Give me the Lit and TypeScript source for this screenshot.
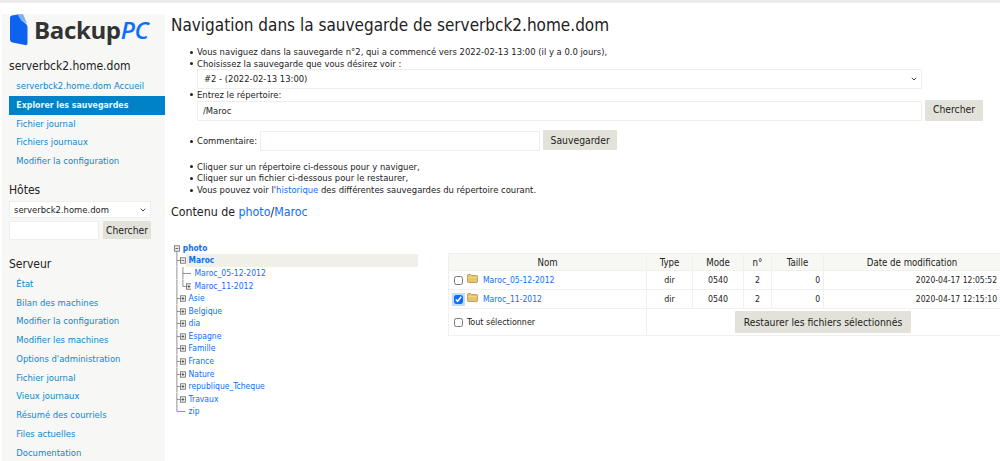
import { LitElement, html, css, svg } from "lit";
import { customElement } from "lit/decorators.js";

type Cell = "I" | "L" | "T" | "TM" | "TP" | "LP" | "M" | "E";
interface Row { cells: Cell[]; label: string; bold?: boolean; active?: boolean }

const treeRows: Row[] = [
  { cells: ["M"], label: "photo", bold: true },
  { cells: ["T", "TM"], label: "Maroc", bold: true, active: true },
  { cells: ["I", "T", "E"], label: "Maroc_05-12-2012" },
  { cells: ["I", "L", "LP"], label: "Maroc_11-2012" },
  ...["Asie", "Belgique", "dia", "Espagne", "Famille", "France", "Nature", "republique_Tcheque", "Travaux"].map(
    (label) => ({ cells: ["T", "TP"] as Cell[], label })
  ),
  { cells: ["L", "E"], label: "zip" },
];

const LINE = "#777";
const renderCell = (c: Cell) => {
  const inner =
    c === "M"
      ? svg`<rect x=".4" y="3.8" width="5" height="5.4" fill="#eee" stroke="#666" stroke-width=".8"/><path d="M1.5 6.5h2.8" stroke="#444" stroke-width=".8"/><path d="M2.9 9.200v3.400" stroke="${LINE}" stroke-width=".8"/>`
      : c === "TM"
      ? svg`<path d="M0 6.500h1" stroke="${LINE}" stroke-width=".8"/><rect x=".4" y="3.800" width="5" height="5.400" fill="#f2f2f0" stroke="#666" stroke-width=".8"/><path d="M1.500 6.500h2.800" stroke="#444" stroke-width=".8"/>`
      : c === "TP" || c === "LP"
      ? svg`<path d="M0 6.500h1" stroke="${LINE}" stroke-width=".8"/><rect x=".4" y="3.800" width="5" height="5.400" fill="#f2f2f0" stroke="#666" stroke-width=".8"/><path d="M1.500 6.500h2.800M2.900 5.100v2.800" stroke="#444" stroke-width=".8"/>`
      : c === "E"
      ? svg`<path d="M0 6.500h5.400" stroke="${LINE}" stroke-width=".8"/>`
      : c === "I"
      ? svg`<path d="M2.900 0v12.600" stroke="${LINE}" stroke-width=".8"/>`
      : c === "L"
      ? svg`<path d="M2.900 0v6.500h3" stroke="${LINE}" stroke-width=".8" fill="none"/>`
      : svg`<path d="M2.900 0v12.600M2.900 6.500h3" stroke="${LINE}" stroke-width=".8"/>`;
  return html`<svg class="cell" viewBox="0 0 5.800 12.600">${inner}</svg>`;
};

const folder = html`<svg class="folder" viewBox="0 0 11 9"><path d="M.5 2V1.200C.5.800.8.500 1.200.500h2.600l1 1.100h5c.4 0 .7.300.7.700V7.800c0 .4-.3.700-.7.700H1.200C.8 8.500.5 8.200.5 7.800Z" fill="#e9c46a" stroke="#a98a3c" stroke-width=".7"/><path d="M1 3h9v.6H1Z" fill="#f6e3a4"/></svg>`;

@customElement("app-root")
export class AppRoot extends LitElement {
  static styles = css`
    :host { display: block; height: 461px; overflow: hidden; background: #fff; color: #222; font-family: "DejaVu Sans Condensed", "DejaVu Sans", Verdana, sans-serif; font-stretch: condensed; font-size: 9.4px; }
    * { box-sizing: border-box; }
    a { color: #0d6efd; text-decoration: none; }
    .topline { height: 2.5px; background: #ececec; }
    .page { display: flex; align-items: flex-start; padding-left: 2px; padding-top: 11.5px; }

    .side { width: 163px; flex: none; height: 460px; background: #f7f7f5; }
    .logo { display: flex; align-items: center; gap: 6px; height: 32px; margin: 0 0 0 7px; }
    .logo svg { width: 19px; height: 32px; flex: none; }
    .logo-text { font-family: "Open Sans", sans-serif; font-stretch: normal; font-size: 24px; font-weight: 700; letter-spacing: -.35px; color: #333; line-height: 32px; }
    .logo-text i { color: #0d6efd; font-weight: 600; }
    .side h2 { margin: 13px 0 0; font-weight: 400; color: #222; font-size: 12px; padding-left: 7px; line-height: 14px; }
    .nav { display: flex; flex-direction: column; margin: 4.200px 0 -.8px 7px; }
    .nav a { height: 18.75px; line-height: 18.75px; padding-left: 7.3px; color: #0f86cc; font-size: 9.4px; white-space: nowrap; }
    .nav a.on { background: #0082c8; color: #e8f4fb; font-weight: 700; font-size: 8.75px; }
    .hostsel { display: block; margin: 4px 0 0 7px; width: 142px; height: 17px; }
    .searchrow { display: flex; gap: 4px; margin: 3px 0 0 7px; align-items: flex-start; }
    .searchrow input { width: 90px; height: 19px; }
    .searchrow button { width: 48px; height: 18px; }
    .side h2.serveur { margin-top: 16.500px; }

    select, input[type="text"] { border: 1px solid #eee; background: #fff; border-radius: 1px; font: inherit; color: #222; outline: none; padding: 0 4px; }
    select {
      appearance: none; -webkit-appearance: none; font-size: 9.4px;
      background-image: url("data:image/svg+xml,%3Csvg xmlns='http://www.w3.org/2000/svg' width='6' height='4'%3E%3Cpath d='M.8.8 3 3l2.200-2.200' fill='none' stroke='%23444' stroke-width='1'/%3E%3C/svg%3E");
      background-repeat: no-repeat; background-position: right 4px center;
    }
    button { border: 0; background: #e2e2da; color: #222; font: inherit; font-size: 10.300px; padding: 0; border-radius: 1px; }

    .main { flex: 1; min-width: 0; padding-left: 6px; }
    h1 { margin: 0; font-weight: 400; font-size: 17px; line-height: 22px; color: #222; }
    ul { margin: 0; padding: 0 0 0 26px; list-style: none; }
    li { position: relative; line-height: 11.7px; }
    li::before { content: ""; position: absolute; left: -7px; top: 4.500px; width: 3px; height: 3px; border-radius: 50%; background: #222; }
    li.cbullet::before { top: 9.500px; }
    .first { margin-top: 10px; }
    .wsel { width: 725px; height: 19.500px; display: block; padding-left: 6px; }
    .pathrow { display: flex; gap: 3px; align-items: flex-start; margin-top: -1px; margin-bottom: 9.500px; }
    .pathrow input { width: 725px; height: 20px; margin-top: 1px; padding-left: 5px; }
    .pathrow button { width: 58px; height: 21px; }
    .comment { display: flex; align-items: flex-start; gap: 3px; height: 21px; line-height: 21px; }
    .comment input { width: 280px; height: 20px; margin-top: 1px; }
    .comment button { width: 74px; height: 20px; line-height: 20px; }
    .after { margin-top: 9.500px; }
    h3 { margin: 9.500px 0 0; font-weight: 400; font-size: 12.300px; line-height: 14px; color: #222; }

    .content { display: flex; align-items: flex-start; margin-top: 22.500px; }
    .tree { width: 277px; flex: none; padding-left: 3px; }
    .row { display: flex; align-items: center; height: 12.600px; white-space: nowrap; width: 244px; }
    .row a { margin-left: 3px; font-size: 8.500px; line-height: 12.600px; flex: 1; }
    .row a.b { font-weight: 700; font-size: 8.300px; }
    .row a.act { background: #f0efe8; margin-left: 0; padding-left: 3px; }
    .cell { width: 5.800px; height: 12.600px; flex: none; display: block; }

    .listing { width: 552px; flex: none; margin-top: 11.500px; }
    table { width: 552px; border-collapse: collapse; table-layout: fixed; }
    th, td { border: 1.500px solid #f0f0ec; padding: 0; font-size: 8.800px; text-align: center; }
    th { background: #f7f7f3; font-weight: 400; height: 17px; color: #222; font-size: 9.600px; }
    td { height: 19px; }
    td.r { text-align: right; padding-right: 3px; font-size: 8.500px; }
    td.name { text-align: left; padding-left: 5px; }
    .namewrap { display: flex; align-items: center; }
    .namewrap input, .all input { width: 9px; height: 9px; margin: 0; flex: none; accent-color: #0d6efd; }
    .namewrap input:checked { box-shadow: 0 0 0 2px rgba(13,110,253,.25); }
    .folder { width: 11px; height: 9px; margin: -3px 5px 0 4px; flex: none; }
    .namewrap a { font-size: 8.500px; }
    .foot td { height: 27px; }
    .all { display: flex; align-items: center; gap: 4px; font-size: 8.900px; }
    .restore { width: 176px; height: 22px; display: block; margin: 0 0 0 88px; }
  `;

  render() {
    const hostLinks = ["serverbck2.home.dom Accueil", "Explorer les sauvegardes", "Fichier journal", "Fichiers journaux", "Modifier la configuration"];
    const serverLinks = ["État", "Bilan des machines", "Modifier la configuration", "Modifier les machines", "Options d'administration", "Fichier journal", "Vieux journaux", "Résumé des courriels", "Files actuelles", "Documentation"];
    return html`
      <div class="topline"></div>
      <div class="page">
        <aside class="side">
          <div class="logo">
            <svg viewBox="0 0 19 32"><path d="M3 1.500 9 .5C10 .4 11 .8 11.500 1.500L12 6 16 9C17.500 10.200 18.500 11.500 18.500 13.500V29C18.500 30.500 17.500 31.500 16 31L3.500 28.500C2 28.200 1 27 1 25.500V4C1 2.700 1.800 1.800 3 1.500Z" fill="#0d62f0"/><path d="M8.500 .6 14 0 18 9.500 12 6Z" fill="#7fb2f5"/></svg>
            <span class="logo-text">Backup<i>PC</i></span>
          </div>
          <h2>serverbck2.home.dom</h2>
          <nav class="nav">
            ${hostLinks.map((l, i) => html`<a href="#" class=${i === 1 ? "on" : ""}>${l}</a>`)}
          </nav>
          <h2>Hôtes</h2>
          <select class="hostsel"><option>serverbck2.home.dom</option></select>
          <div class="searchrow"><input type="text" /><button>Chercher</button></div>
          <h2 class="serveur">Serveur</h2>
          <nav class="nav">
            ${serverLinks.map((l) => html`<a href="#">${l}</a>`)}
          </nav>
        </aside>
        <main class="main">
          <h1>Navigation dans la sauvegarde de serverbck2.home.dom</h1>
          <ul class="first">
            <li>Vous naviguez dans la sauvegarde n°2, qui a commencé vers 2022-02-13 13:00 (il y a 0.0 jours),</li>
            <li>Choisissez la sauvegarde que vous désirez voir :
              <select class="wsel"><option>#2 - (2022-02-13 13:00)</option></select>
            </li>
            <li>Entrez le répertoire:
              <div class="pathrow"><input type="text" value="/Maroc" /><button>Chercher</button></div>
            </li>
            <li class="cbullet"><div class="comment">Commentaire: <input type="text" /><button>Sauvegarder</button></div></li>
          </ul>
          <ul class="after">
            <li>Cliquer sur un répertoire ci-dessous pour y naviguer,</li>
            <li>Cliquer sur un fichier ci-dessous pour le restaurer,</li>
            <li>Vous pouvez voir l'<a href="#">historique</a> des différentes sauvegardes du répertoire courant.</li>
          </ul>
          <h3>Contenu de <a href="#">photo</a>/<a href="#">Maroc</a></h3>
          <div class="content">
            <div class="tree">
              ${treeRows.map((r) => html`<div class="row">${r.cells.map(renderCell)}<a href="#" class="${r.bold ? "b" : ""} ${r.active ? "act" : ""}">${r.label}</a></div>`)}
            </div>
            <div class="listing">
              <table>
                <colgroup><col style="width:198px" /><col style="width:46px" /><col style="width:51px" /><col style="width:28px" /><col style="width:52px" /><col style="width:177px" /></colgroup>
                <thead><tr><th>Nom</th><th>Type</th><th>Mode</th><th>n°</th><th>Taille</th><th>Date de modification</th></tr></thead>
                <tbody>
                  <tr>
                    <td class="name"><div class="namewrap"><input type="checkbox" />${folder}<a href="#">Maroc_05-12-2012</a></div></td>
                    <td>dir</td><td>0540</td><td>2</td><td class="r">0</td><td class="r">2020-04-17 12:05:52</td>
                  </tr>
                  <tr>
                    <td class="name"><div class="namewrap"><input type="checkbox" checked />${folder}<a href="#">Maroc_11-2012</a></div></td>
                    <td>dir</td><td>0540</td><td>2</td><td class="r">0</td><td class="r">2020-04-17 12:15:10</td>
                  </tr>
                  <tr class="foot">
                    <td class="name"><label class="all"><input type="checkbox" />Tout sélectionner</label></td>
                    <td colspan="5"><button class="restore">Restaurer les fichiers sélectionnés</button></td>
                  </tr>
                </tbody>
              </table>
            </div>
          </div>
        </main>
      </div>
    `;
  }
}
